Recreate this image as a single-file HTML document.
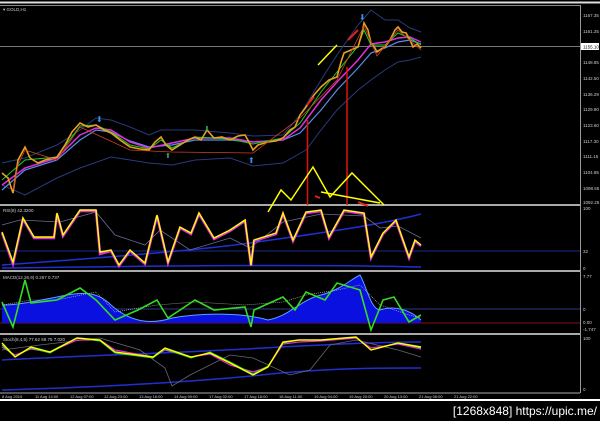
<!DOCTYPE html>
<html><head><meta charset="utf-8"><style>
html,body{margin:0;padding:0;background:#000;width:600px;height:421px;overflow:hidden}
svg{display:block}
text{font-family:"Liberation Sans",sans-serif}
</style></head><body>
<svg width="600" height="421" viewBox="0 0 600 421" xmlns="http://www.w3.org/2000/svg">
<rect width="600" height="421" fill="#000"/>
<line x1="0" y1="2.5" x2="600" y2="2.5" stroke="#ddd" stroke-width="2"/>
<!-- frame -->
<line x1="0" y1="5.5" x2="580" y2="5.5" stroke="#888" stroke-width="1"/>
<line x1="580.5" y1="5" x2="580.5" y2="393" stroke="#999" stroke-width="1"/>
<line x1="0" y1="205" x2="580" y2="205" stroke="#aaa" stroke-width="2"/>
<line x1="0" y1="271" x2="580" y2="271" stroke="#aaa" stroke-width="2"/>
<line x1="0" y1="334" x2="580" y2="334" stroke="#aaa" stroke-width="2"/>
<line x1="0" y1="393" x2="580" y2="393" stroke="#aaa" stroke-width="1"/>
<line x1="0" y1="400" x2="600" y2="400" stroke="#fff" stroke-width="2"/>
<!-- price line -->
<line x1="0" y1="46.5" x2="580" y2="46.5" stroke="#777" stroke-width="1"/>
<!-- main bollinger -->
<polyline fill="none" stroke="#2a3a7a" stroke-width="1" points="2,163 25,158 57,145 80,130 96,118 111,120 130,127 149,135 161,130 195,130 230,133 253,136 283,135 300,115 321,80 337,55 358,25 371,10 385,20 398,20 410,28 421,32"/>
<polyline fill="none" stroke="#2a3a7a" stroke-width="1" points="2,185 25,195 57,178 80,168 111,157 149,163 172,165 195,160 230,158 253,166 283,163 306,150 321,130 337,110 358,90 371,80 385,70 398,62 410,60 421,57"/>
<!-- MAs -->
<polyline fill="none" stroke="#5a8ee8" stroke-width="1.2" points="2,190 25,170 57,160 80,140 96,130 111,132 130,141 149,147 172,145 195,140 230,140 253,142 283,140 300,133 321,110 337,90 358,68 371,53 385,48 398,42 410,40 421,44"/>
<polyline fill="none" stroke="#e030e0" stroke-width="1.5" points="2,185 25,168 57,158 80,135 96,128 111,130 130,142 149,148 172,143 195,138 230,138 253,142 283,140 300,128 321,100 337,82 358,60 371,44 385,42 398,38 410,37 421,42"/>
<polyline fill="none" stroke="#22cc22" stroke-width="1" points="2,180 25,160 57,157 80,126 96,125 111,132 130,145 149,149 161,140 172,148 195,137 230,139 253,144 283,138 300,123 321,92 337,72 358,46 364,30 371,45 385,45 398,33 410,38 421,45"/>
<!-- candles-ish price -->
<polyline fill="none" stroke="#e8a020" stroke-width="1.6" points="2,173 8,178 13,193 18,160 25,147 30,158 38,163 45,160 57,157 65,145 72,132 80,123 88,127 96,125 104,130 111,133 120,140 130,147 140,149 149,150 155,142 161,137 166,145 172,150 180,145 188,140 195,137 201,140 207,130 214,138 222,137 230,140 238,136 245,135 249,142 253,150 258,145 268,142 276,141 283,138 290,130 295,127 300,115 306,107 314,95 321,87 329,80 337,77 341,62 344,53 351,50 358,47 362,33 364,23 368,30 371,43 375,48 377,52 381,49 385,47 390,40 395,30 398,27 402,32 406,33 410,40 413,47 417,44 421,48"/>
<polyline fill="none" stroke="#d04020" stroke-width="0.8" points="13,190 18,165 25,150 57,160 80,127 130,150 172,152 253,153 300,118 337,80 364,26 377,56 398,30 421,50"/>
<!-- arrows markers -->
<text x="96" y="122" fill="#3a8ee8" font-size="8">⬇</text>
<text x="204" y="131" fill="#3aa070" font-size="7">⬇</text>
<text x="165" y="158" fill="#3aa070" font-size="7">⬆</text>
<text x="248" y="163" fill="#3a8ee8" font-size="8">⬆</text>
<text x="359" y="20" fill="#3a8ee8" font-size="8">⬇</text>
<!-- annotations -->
<line x1="318" y1="65" x2="337" y2="45" stroke="#ff0" stroke-width="1.5"/>
<line x1="348" y1="40" x2="358" y2="30" stroke="#e02020" stroke-width="2"/>
<line x1="307" y1="105" x2="314" y2="97" stroke="#e02020" stroke-width="2"/>
<line x1="307.5" y1="120" x2="307.5" y2="205" stroke="#e01010" stroke-width="1.5"/>
<line x1="347" y1="67" x2="347" y2="205" stroke="#e01010" stroke-width="1.5"/>
<polyline fill="none" stroke="#ff0" stroke-width="1.5" points="268,212 281,190 291,200 313,167 330,197 352,173 384,205"/>
<line x1="321" y1="192" x2="380" y2="203" stroke="#ff0" stroke-width="1.5"/>
<line x1="315" y1="196" x2="320" y2="198" stroke="#e02020" stroke-width="2"/>
<line x1="358" y1="202" x2="368" y2="206" stroke="#e02020" stroke-width="2"/>
<text x="3" y="11" fill="#ccc" font-size="4.5">▾ GOLD,H1</text>
<!-- price axis -->
<g fill="#ccc" font-size="4.5">
<text x="583" y="17">1167.35</text><text x="583" y="33">1161.25</text>
<text x="583" y="64">1148.85</text><text x="583" y="80">1142.50</text><text x="583" y="96">1136.29</text>
<text x="583" y="111">1129.90</text><text x="583" y="127">1123.60</text><text x="583" y="143">1117.30</text>
<text x="583" y="158">1111.15</text><text x="583" y="174">1104.85</text><text x="583" y="190">1098.55</text>
<text x="583" y="204">1092.25</text>
</g>
<rect x="581" y="43" width="18" height="7" fill="#fff"/>
<text x="583" y="48.5" fill="#000" font-size="4.5">1155.10</text>
<!-- RSI -->
<line x1="0" y1="251" x2="580" y2="251" stroke="#1a2a8a" stroke-width="1"/>
<path d="M2,265 C100,258 200,250 250,243 C320,233 380,225 421,214" fill="none" stroke="#2030d0" stroke-width="1.5"/>
<path d="M2,268 C150,266 300,264 421,267" fill="none" stroke="#2030d0" stroke-width="1.5"/>
<polyline fill="none" stroke="#6a6a9a" stroke-width="0.8" points="2,225 20,220 60,222 96,212 115,235 145,245 160,230 190,250 230,238 250,248 283,222 321,214 364,216 380,228 398,226 421,238"/>
<polyline fill="none" stroke="#e030e0" stroke-width="2.4" points="2,233 13,264 23,219 34,238 54,238 57,214 63,236 80,211 96,211 100,254 111,251 119,266 130,251 145,264 157,216 168,263 180,228 191,234 199,214 214,239 230,231 245,221 251,266 254,241 276,234 283,214 293,241 306,213 321,211 329,238 344,211 364,214 371,258 383,234 396,221 409,258 415,241 421,246"/>
<polyline fill="none" stroke="#ff0" stroke-width="1.4" points="2,232 13,262 23,218 34,237 54,237 57,213 63,235 80,210 96,210 100,252 111,250 119,265 130,250 145,263 157,215 168,262 180,227 191,233 199,213 214,238 230,230 245,220 251,265 254,240 276,233 283,213 293,240 306,212 321,210 329,237 344,210 364,213 371,257 383,233 396,220 409,257 415,240 421,245"/>
<text x="3" y="212" fill="#ccc" font-size="4.5">RSI(8) 42.3200</text>
<g fill="#ccc" font-size="4.5"><text x="583" y="210">100</text><text x="583" y="253">32</text><text x="583" y="270">0</text></g>
<!-- MACD -->
<line x1="0" y1="309" x2="580" y2="309" stroke="#2a3a8a" stroke-width="1"/>
<line x1="0" y1="323" x2="580" y2="323" stroke="#8a1010" stroke-width="1"/>
<path d="M2,323 L2,305 C20,305 40,300 57,297 C80,292 96,290 111,305 C130,322 150,325 172,318 C200,313 240,312 268,320 C290,316 300,300 321,295 C340,290 350,280 360,275 C366,285 371,310 380,310 C395,305 410,310 421,320 L421,323 Z" fill="#0a10e0"/>
<path d="M2,305 C20,305 40,300 57,297 C80,292 96,290 111,305 C130,322 150,325 172,318 C200,313 240,312 268,320 C290,316 300,300 321,295 C340,290 350,280 360,275 C366,285 371,310 380,310 C395,305 410,310 421,320" fill="none" stroke="#5aa0ff" stroke-width="1"/>
<polyline fill="none" stroke="#ccc" stroke-width="0.6" stroke-dasharray="1,1" points="2,305 31,300 57,300 96,292 115,312 157,305 195,302 245,305 283,302 306,295 337,290 360,285 380,305 409,315 421,318"/>
<polyline fill="none" stroke="#33dd22" stroke-width="1.6" points="2,302 13,327 25,280 31,303 57,300 80,288 96,300 115,320 138,310 157,300 168,318 195,300 214,310 245,307 251,327 254,310 283,297 295,310 306,292 325,300 337,283 360,290 371,330 383,300 394,297 409,322 421,315"/>
<text x="3" y="279" fill="#ccc" font-size="4.5">MACD(12,26,9) 0.267 0.737</text>
<g fill="#ccc" font-size="4.5"><text x="583" y="278">7.77</text><text x="583" y="311">0</text><text x="583" y="324">0.00</text><text x="583" y="331">-1.747</text></g>
<!-- Stoch -->
<path d="M2,360 C100,355 200,352 280,347 C340,344 380,342 421,342" fill="none" stroke="#2030d0" stroke-width="1.5"/>
<path d="M2,390 C100,387 200,382 280,373 C340,368 380,368 421,368" fill="none" stroke="#2030d0" stroke-width="1.5"/>
<polyline fill="none" stroke="#667" stroke-width="0.8" points="2,350 40,345 100,338 140,350 165,368 172,386 190,375 230,355 253,358 290,375 310,370 330,345 356,340 398,350 421,357"/>
<polyline fill="none" stroke="#e030e0" stroke-width="1.2" points="2,347 15,355 31,349 50,352 77,340 100,340 115,350 153,357 165,350 191,357 210,354 230,365 253,372 268,367 283,344 299,342 321,341 356,338 371,348 398,344 421,349"/>
<polyline fill="none" stroke="#33dd22" stroke-width="1" points="2,345 15,357 31,348 50,353 77,338 100,341 115,353 153,358 165,349 191,358 210,352 230,362 253,374 268,366 283,343 299,340 321,340 356,337 371,350 398,343 421,348"/>
<polyline fill="none" stroke="#ff0" stroke-width="1.4" points="2,343 15,357 31,347 50,352 77,338 100,340 115,352 153,357 165,348 191,357 210,353 230,363 253,375 268,367 283,342 299,340 321,340 356,337 371,350 398,343 421,347"/>
<text x="3" y="341" fill="#ccc" font-size="4.5">Stoch(8,4,5) 77.62 69.75 7.020</text>
<g fill="#ccc" font-size="4.5"><text x="583" y="340">100</text><text x="583" y="391">0</text></g>
<!-- time axis -->
<g fill="#ccc" font-size="4">
<text x="2" y="398">8 Aug 2015</text><text x="35" y="398">11 Aug 14:00</text><text x="70" y="398">12 Aug 07:00</text>
<text x="104" y="398">12 Aug 23:00</text><text x="139" y="398">13 Aug 16:00</text><text x="174" y="398">14 Aug 09:00</text>
<text x="209" y="398">17 Aug 02:00</text><text x="244" y="398">17 Aug 18:00</text><text x="279" y="398">18 Aug 11:00</text>
<text x="314" y="398">19 Aug 04:00</text><text x="349" y="398">19 Aug 20:00</text><text x="384" y="398">20 Aug 13:00</text>
<text x="419" y="398">21 Aug 06:00</text><text x="454" y="398">21 Aug 22:00</text>
</g>
<text x="597" y="415" fill="#fff" font-size="12" text-anchor="end" font-family="Liberation Mono, monospace">[1268x848] https://upic.me/</text>
</svg>
</body></html>
